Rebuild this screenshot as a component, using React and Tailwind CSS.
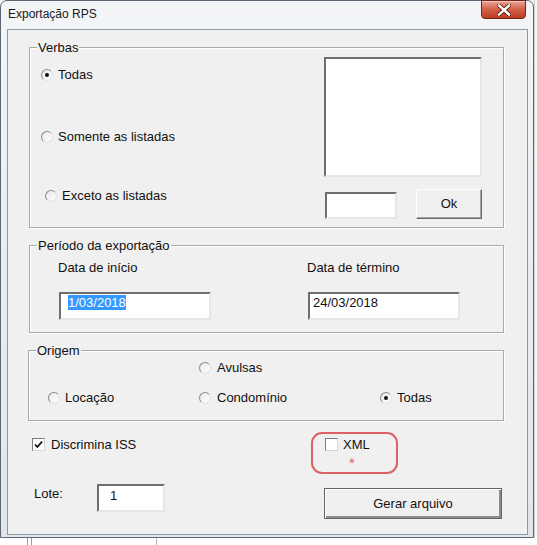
const sunken =
  'border-2 border-t-[#6e6e6e] border-l-[#6e6e6e] border-r-[#e6e6e6] border-b-[#e6e6e6] bg-white'

function Radio({ checked }) {
  return (
    <span className="flex h-[12px] w-[12px] shrink-0 items-center justify-center rounded-full border border-t-[#8a8a8a] border-l-[#8a8a8a] border-r-[#e2e2e2] border-b-[#e2e2e2] bg-gradient-to-br from-[#e9e9e9] to-white">
      {checked && <span className="h-[4px] w-[4px] rounded-full bg-[#111]" />}
    </span>
  )
}

function Check({ checked }) {
  return (
    <span className="flex h-[13px] w-[13px] shrink-0 items-center justify-center border border-t-[#7c7c7c] border-l-[#7c7c7c] border-r-[#d6d6d6] border-b-[#d6d6d6] bg-white">
      {checked && (
        <svg width="9" height="9" viewBox="0 0 9 9">
          <path d="M1 4.5 L3.4 7 L8 1.6" fill="none" stroke="#111" strokeWidth="1.8" />
        </svg>
      )}
    </span>
  )
}

function Option({ checked, label, gap = 'gap-[5px]' }) {
  return (
    <div className={`flex h-[16px] items-center ${gap}`}>
      <Radio checked={checked} />
      <span className="leading-[16px]">{label}</span>
    </div>
  )
}

function Group({ label, className, children }) {
  return (
    <div className={`relative border border-[#a9a9a9] shadow-[1px_1px_0_#fff,inset_1px_1px_0_#fff] ${className}`}>
      <span className="absolute -top-[8px] left-[7px] bg-[#f0f0f0] px-[1px] leading-[15px]">{label}</span>
      {children}
    </div>
  )
}

export default function App() {
  return (
    <div className="h-[545px] w-[537px] overflow-hidden bg-[#f4f4f4] text-[13px] text-[#111] font-['Liberation_Sans',Arial,sans-serif]">
      <div className="flex">
        <div className="h-[538px] w-[534px] shrink-0 rounded-t-[7px] border border-[#5d6673] bg-gradient-to-b from-[#f3f5f7] via-[#e9edf1] to-[#e2e6eb]">
          <div className="flex h-[28px] items-start justify-between">
            <span className="pl-[7px] pt-[6px] text-[12px] leading-[15px] text-[#1a1a1a]">Exportação RPS</span>
            <div className="mr-[7px] -mt-[1px] flex h-[19px] w-[45px] items-center justify-center rounded-b-[4px] border border-[#6e2418] bg-gradient-to-b from-[#e9a593] via-[#d2604a] to-[#c03a22] shadow-[inset_0_1px_0_#f6c8bb]">
              <svg width="14" height="12" viewBox="0 0 14 12">
                <path d="M2 1.5 L12 10.5 M12 1.5 L2 10.5" stroke="#5a1c10" strokeWidth="4.2" strokeLinecap="square" />
                <path d="M2 1.5 L12 10.5 M12 1.5 L2 10.5" stroke="#fff" strokeWidth="2.4" strokeLinecap="square" />
              </svg>
            </div>
          </div>

          <div className="ml-[6px] h-[506px] w-[521px] border border-[#8e99a6] bg-[#f0f0f0]">
            <Group label="Verbas" className="ml-[21px] mt-[17px] flex h-[181px] w-[475px]">
              <div className="pl-[11px] pt-[19px]">
                <Option checked label="Todas" />
                <div className="mt-[46px]">
                  <Option label="Somente as listadas" />
                </div>
                <div className="ml-[4px] mt-[43px]">
                  <Option label="Exceto as listadas" />
                </div>
              </div>
              <div className="ml-auto mr-[21px] mt-[9px]">
                <div className={`h-[120px] w-[158px] ${sunken}`} />
                <div className="mt-[12px] flex items-end">
                  <div className={`ml-[1px] h-[27px] w-[72px] ${sunken}`} />
                  <button className="ml-[19px] flex h-[30px] w-[66px] items-center justify-center border border-t-white border-l-white border-r-[#6b6b6b] border-b-[#6b6b6b] bg-[#f0f0f0] shadow-[inset_-1px_-1px_0_#a3a3a3]">
                    Ok
                  </button>
                </div>
              </div>
            </Group>

            <Group label="Período da exportação" className="ml-[21px] mt-[17px] flex h-[88px] w-[475px]">
              <div className="w-[277px] pl-[28px] pt-[14px]">
                <div className="leading-[16px]">Data de início</div>
                <div className={`ml-[1px] mt-[16px] h-[28px] w-[152px] pl-[7px] pt-[1px] leading-[16px] ${sunken}`}>
                  <span className="bg-[#3399ff] text-white">1/03/2018</span>
                </div>
              </div>
              <div className="pt-[14px]">
                <div className="leading-[16px]">Data de término</div>
                <div className={`ml-[1px] mt-[16px] h-[28px] w-[152px] pl-[3px] pt-[1px] leading-[16px] ${sunken}`}>
                  24/03/2018
                </div>
              </div>
            </Group>

            <Group label="Origem" className="ml-[20px] mt-[17px] h-[71px] w-[476px]">
              <div className="grid grid-cols-[151px_181px_auto] gap-y-[14px] pl-[19px] pt-[9px]">
                <div />
                <Option label="Avulsas" gap="gap-[6px]" />
                <div />
                <Option label="Locação" />
                <Option label="Condomínio" gap="gap-[6px]" />
                <Option checked label="Todas" />
              </div>
            </Group>

            <div className="mt-[11px] flex items-start">
              <div className="w-[303px] pl-[24px] pt-[5px]">
                <div className="flex h-[15px] items-center gap-[6px]">
                  <Check checked />
                  <span className="leading-[16px]">Discrimina ISS</span>
                </div>
              </div>
              <div className="h-[42px] w-[87px] rounded-[11px] border-2 border-[#db6264] pl-[12px] pt-[3px]">
                <div className="flex h-[15px] items-center gap-[5px]">
                  <Check />
                  <span className="leading-[16px]">XML</span>
                </div>
                <div className="ml-[24px] mt-[3px] h-[15px] text-[15px] leading-[15px] text-[#e55c60]">*</div>
              </div>
            </div>

            <div className="mt-[10px] flex items-start">
              <div className="flex w-[316px]">
                <span className="ml-[26px] mt-[2px] w-[63px] leading-[16px]">Lote:</span>
                <div className={`h-[28px] w-[68px] pl-[11px] pt-[2px] leading-[16px] ${sunken}`}>1</div>
              </div>
              <button className="mt-[4px] flex h-[31px] w-[178px] items-center justify-center border border-[#656565] bg-[#f0f0f0] shadow-[inset_1px_1px_0_#fff,inset_-2px_-2px_0_#8c8c8c]">
                Gerar arquivo
              </button>
            </div>
          </div>
        </div>
        <div className="h-[538px] flex-1 border-l border-[#cfcfcf] bg-[#f7f7f7]" />
      </div>
      <div className="flex h-[7px] bg-white">
        <div className="w-[28px] border-r border-[#9a9a9a]" />
        <div className="w-[4px] border-r border-[#9a9a9a]" />
        <div className="w-[125px] border-r border-[#b5b5b5]" />
        <div className="flex-1" />
      </div>
    </div>
  )
}
